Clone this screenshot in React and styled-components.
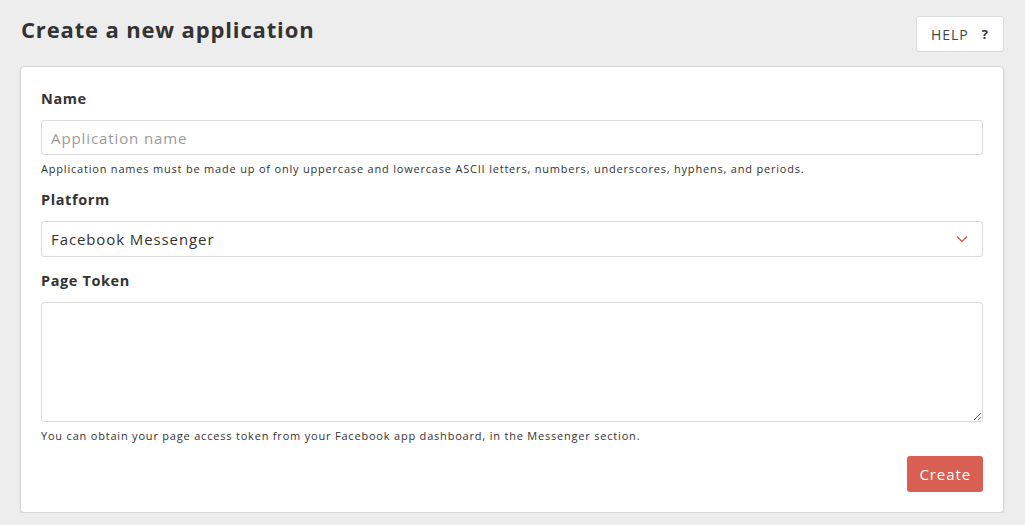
import React, { useState } from "react";
import styled, { createGlobalStyle } from "styled-components";

const GlobalStyle = createGlobalStyle`
  body {
    margin: 0;
    background: #ededed;
    font-family: "Open Sans", "Liberation Sans", sans-serif;
    color: #333;
  }
`;

const Page = styled.div`
  padding: 14px 21px 0 20px;
`;

const Header = styled.div`
  display: flex;
  justify-content: space-between;
  align-items: flex-start;
  margin-bottom: 14px;
`;

const Title = styled.h1`
  margin: 0;
  padding: 0 0 0 1px;
  font-size: 22px;
  font-weight: 700;
  color: #333;
  letter-spacing: 0.85px;
`;

const HelpButton = styled.button`
  height: 36px;
  margin-top: 2px;
  padding: 0 14px;
  background: #fff;
  border: 1px solid #dcdcdc;
  border-radius: 3px;
  font-family: inherit;
  font-size: 14px;
  color: #444;
  letter-spacing: 1px;
  display: flex;
  align-items: center;
  gap: 13px;
  cursor: pointer;

  b {
    font-size: 13px;
    color: #333;
  }
`;

const Card = styled.form`
  background: #fff;
  border: 1px solid #d6d6d6;
  border-radius: 4px;
  box-shadow: 0 1px 2px rgba(0, 0, 0, 0.12);
  padding: 22px 20px 20px 20px;
  display: flex;
  flex-direction: column;
`;

const Field = styled.div`
  display: flex;
  flex-direction: column;
  margin-bottom: ${({ $last }) => ($last ? "0" : "14px")};
`;

const Label = styled.label`
  font-size: 14.5px;
  font-weight: 700;
  color: #333;
  letter-spacing: 0.6px;
  margin-bottom: 12px;
`;

const inputBase = `
  box-sizing: border-box;
  width: 100%;
  border: 1px solid #dadada;
  border-radius: 3px;
  background: #fff;
  font-family: "Open Sans", "Liberation Sans", sans-serif;
  font-size: 15px;
  color: #333;
  letter-spacing: 0.9px;
  padding: 0 9px;
  outline: none;
`;

const TextInput = styled.input`
  ${inputBase}
  height: 35px;
  &::placeholder {
    color: #9a9a9a;
  }
`;

const SelectWrap = styled.div`
  position: relative;
`;

const Select = styled.select`
  ${inputBase}
  height: 36px;
  appearance: none;
  cursor: pointer;
`;

const Chevron = styled.svg`
  position: absolute;
  right: 15px;
  top: 14px;
  pointer-events: none;
`;

const TextArea = styled.textarea`
  ${inputBase}
  height: 120px;
  padding: 8px 9px;
  display: block;
`;

const Hint = styled.p`
  margin: 6px 0 0;
  font-size: 11px;
  color: #333;
  letter-spacing: 0.8px;
`;

const Actions = styled.div`
  display: flex;
  justify-content: flex-end;
  margin-top: 13px;
`;

const CreateButton = styled.button`
  height: 36px;
  padding: 0 12px;
  background: #d95f52;
  color: #fff;
  border: none;
  border-radius: 3px;
  font-family: inherit;
  font-size: 15px;
  letter-spacing: 0.9px;
  cursor: pointer;
`;

export default function App() {
  const [name, setName] = useState("");
  const [platform, setPlatform] = useState("messenger");
  const [token, setToken] = useState("");

  return (
    <>
      <GlobalStyle />
      <Page>
        <Header>
          <Title>Create a new application</Title>
          <HelpButton type="button">
            HELP <b>?</b>
          </HelpButton>
        </Header>
        <Card onSubmit={(e) => e.preventDefault()}>
          <Field>
            <Label>Name</Label>
            <TextInput
              placeholder="Application name"
              value={name}
              onChange={(e) => setName(e.target.value)}
            />
            <Hint>
              Application names must be made up of only uppercase and lowercase ASCII letters, numbers,
              underscores, hyphens, and periods.
            </Hint>
          </Field>
          <Field>
            <Label>Platform</Label>
            <SelectWrap>
              <Select value={platform} onChange={(e) => setPlatform(e.target.value)}>
                <option value="messenger">Facebook Messenger</option>
                <option value="telegram">Telegram</option>
                <option value="slack">Slack</option>
              </Select>
              <Chevron width="12" height="8" viewBox="0 0 12 8">
                <path d="M1 1.5l5 5 5-5" stroke="#d95f52" strokeWidth="1.4" fill="none" />
              </Chevron>
            </SelectWrap>
          </Field>
          <Field $last>
            <Label>Page Token</Label>
            <TextArea value={token} onChange={(e) => setToken(e.target.value)} />
            <Hint>You can obtain your page access token from your Facebook app dashboard, in the Messenger section.</Hint>
          </Field>
          <Actions>
            <CreateButton type="submit">Create</CreateButton>
          </Actions>
        </Card>
      </Page>
    </>
  );
}
